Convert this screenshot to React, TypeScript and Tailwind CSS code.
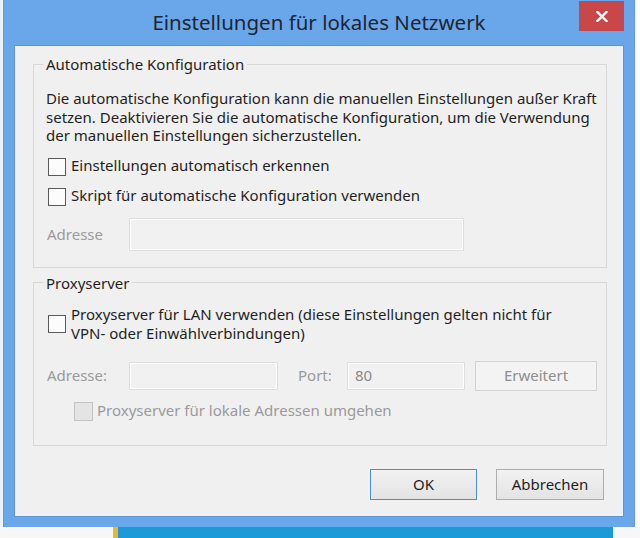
import React from "react";

function CheckBox({ disabled = false }: { disabled?: boolean }) {
  return (
    <div
      className={
        disabled
          ? "w-[19px] h-[19px] shrink-0 border border-[#c4c4c4] bg-[#e4e4e4]"
          : "w-[18px] h-[18px] shrink-0 border border-[#5a5a5a] bg-[#fcfcfc]"
      }
    />
  );
}

export default function App() {
  return (
    <div className="w-[640px] h-[538px] bg-white flex flex-col overflow-hidden font-['Noto_Sans',sans-serif] text-[15px] text-[#1f1f1f]">
      <div className="flex h-[527px]">
        <div className="w-[3px] bg-[#eef1f5]" />
        <div className="w-[632px] bg-[#6aa6ea] flex flex-col px-[10px] pb-[10px] border-l border-r border-[#5f9be0]">
          {/* title bar */}
          <div className="h-[45px] grid grid-cols-[1fr_auto_1fr] items-start">
            <div />
            <div className="h-[45px] flex items-center text-[20.5px] text-[#1b2633]">
              Einstellungen für lokales Netzwerk
            </div>
            <div className="flex justify-end">
              <div className="w-[45px] h-[30px] mt-[1px] bg-[#c8484a] flex items-center justify-center">
                <svg width="12" height="11" viewBox="0 0 12 11">
                  <path d="M1.5 1 L10.5 10 M10.5 1 L1.5 10" stroke="#ffffff" strokeWidth="2.4" strokeLinecap="square" />
                </svg>
              </div>
            </div>
          </div>
          {/* client */}
          <div className="flex-1 bg-[#f0f0f0] flex flex-col pl-[18px] pr-[16px] pt-[9px] border border-[#5b96da]">
            <fieldset className="border border-[#d8d8d8] pl-[12px] pr-[8px] pt-[16px] pb-[16px]">
              <legend className="ml-[-3px] px-[3px] leading-[18px]">Automatische Konfiguration</legend>
              <p className="leading-[18.5px] whitespace-nowrap">
                Die automatische Konfiguration kann die manuellen Einstellungen außer Kraft
                <br />
                setzen. Deaktivieren Sie die automatische Konfiguration, um die Verwendung
                <br />
                der manuellen Einstellungen sicherzustellen.
              </p>
              <div className="mt-[12px] h-[20px] flex items-center gap-[5px] pl-[2px]">
                <CheckBox />
                <span className="mt-[-3px]">Einstellungen automatisch erkennen</span>
              </div>
              <div className="mt-[10px] h-[20px] flex items-center gap-[5px] pl-[2px]">
                <CheckBox />
                <span className="mt-[-2px]">Skript für automatische Konfiguration verwenden</span>
              </div>
              <div className="mt-[11px] h-[33px] flex items-center">
                <span className="w-[83px] pl-[1px] text-[#9a9a9a]">Adresse</span>
                <div className="w-[335px] h-[33px] border border-[#dedede] bg-[#f1f1f1] shadow-[inset_0_0_0_1px_#ffffff]" />
              </div>
            </fieldset>
            <fieldset className="mt-[6px] border border-[#d8d8d8] pl-[12px] pr-[8px] pt-[13px] pb-[23px]">
              <legend className="ml-[-3px] px-[3px] leading-[18px]">Proxyserver</legend>
              <div className="flex items-center gap-[5px] pl-[2px]">
                <CheckBox />
                <span className="leading-[19px] whitespace-nowrap">
                  Proxyserver für LAN verwenden (diese Einstellungen gelten nicht für
                  <br />
                  VPN- oder Einwählverbindungen)
                </span>
              </div>
              <div className="mt-[18px] h-[30px] flex items-center">
                <span className="w-[83px] pl-[1px] text-[#9a9a9a]">Adresse:</span>
                <div className="w-[149px] h-[28px] border border-[#dedede] bg-[#f1f1f1] shadow-[inset_0_0_0_1px_#ffffff]" />
                <span className="ml-[20px] w-[49px] text-[#9a9a9a]">Port:</span>
                <div className="w-[118px] h-[28px] border border-[#dedede] bg-[#f1f1f1] shadow-[inset_0_0_0_1px_#ffffff] flex items-center pl-[7px] text-[#8a8a8a]">
                  80
                </div>
                <div className="ml-[10px] w-[122px] h-[30px] border border-[#d3d3d3] bg-[#f3f3f3] flex items-center justify-center text-[#8e8e8e]">
                  Erweitert
                </div>
              </div>
              <div className="mt-[11px] h-[20px] flex items-center gap-[4px] pl-[28px]">
                <CheckBox disabled />
                <span className="text-[#9a9a9a] mt-[-2px]">Proxyserver für lokale Adressen umgehen</span>
              </div>
            </fieldset>
            <div className="mt-[23px] flex justify-end gap-[19px] pr-[3px]">
              <div className="w-[107px] h-[31px] border border-[#4a8fd4] bg-gradient-to-b from-[#f2f2f2] to-[#e3e3e3] flex items-center justify-center">
                OK
              </div>
              <div className="w-[108px] h-[31px] border border-[#adadad] bg-gradient-to-b from-[#f2f2f2] to-[#e3e3e3] flex items-center justify-center">
                Abbrechen
              </div>
            </div>
          </div>
        </div>
        <div className="flex-1 bg-white" />
      </div>
      <div className="flex h-[11px]">
        <div className="w-[113px] bg-[#f7f7f7]" />
        <div className="w-[5px] bg-[#e8b830]" />
        <div className="w-[495px] bg-[#1b9ad9]" />
        <div className="flex-1 bg-[#f7f7f7]" />
      </div>
    </div>
  );
}
